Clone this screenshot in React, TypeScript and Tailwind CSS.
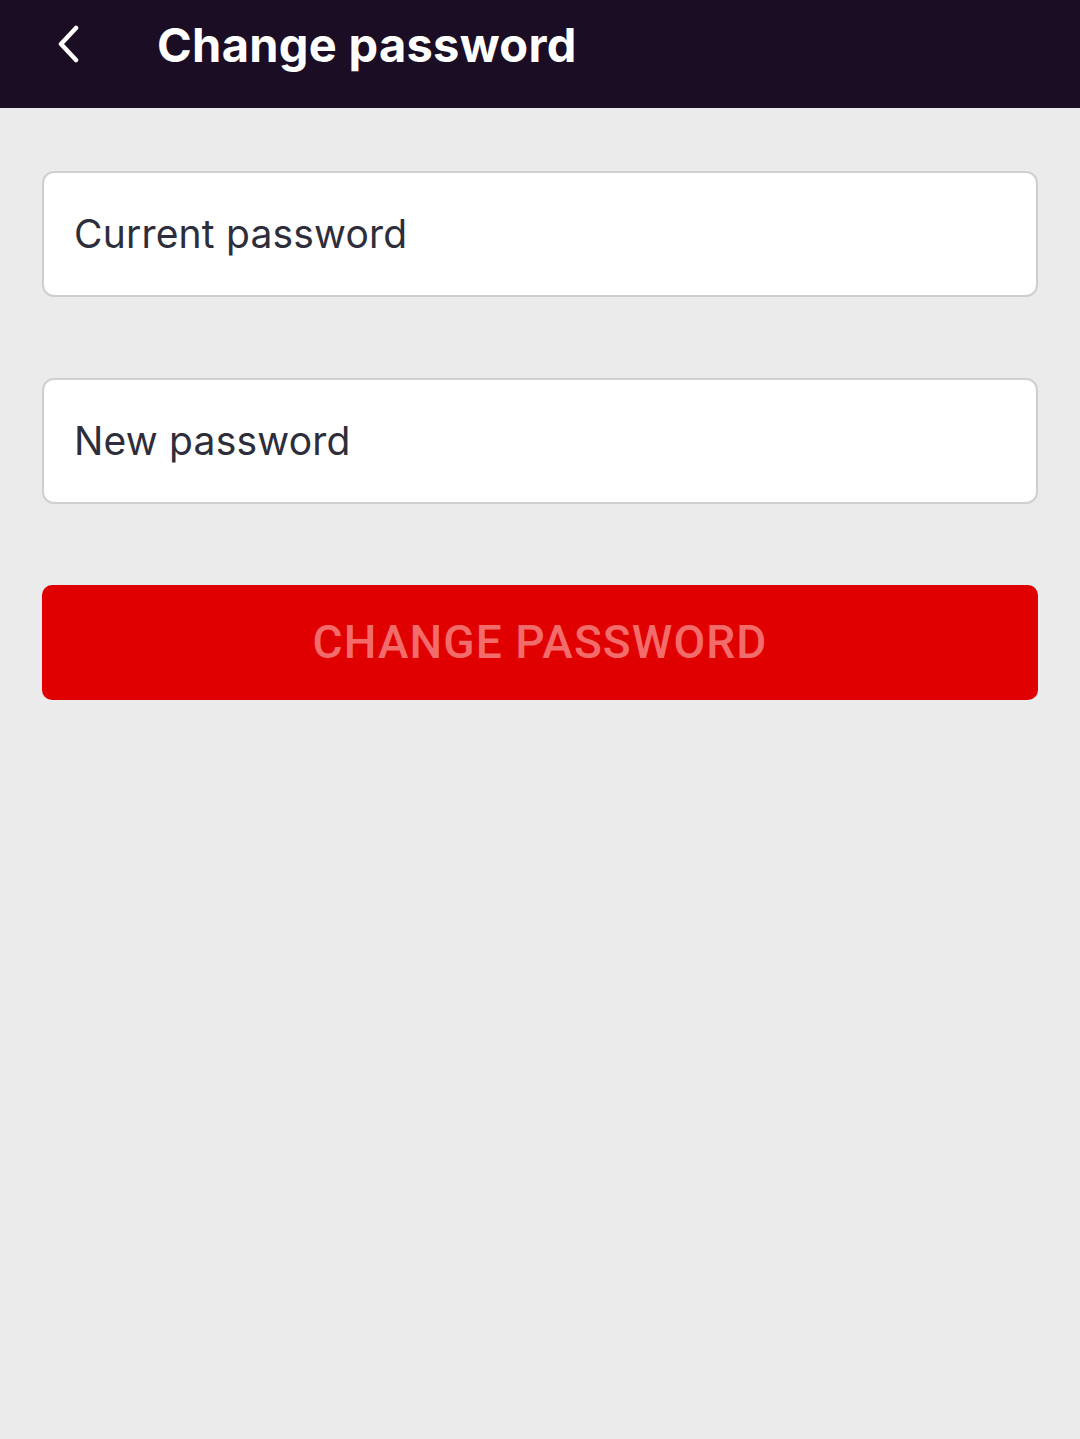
export default function App() {
  return (
    <div className="min-h-[1439px] w-full bg-[#ebebeb]" style={{ fontFamily: 'Inter, "Noto Sans", sans-serif' }}>
      <header className="flex h-[108px] items-center bg-[#1b0d24] pb-[18px]">
        <button className="ml-[47px] flex h-[40px] w-[40px] items-center justify-center text-white">
          <svg width="30" height="40" viewBox="0 0 30 40" fill="none">
            <path d="M24 3 L9 19 L24 35" stroke="currentColor" strokeWidth="4.5" strokeLinecap="round" strokeLinejoin="round" />
          </svg>
        </button>
        <h1 className="ml-[70px] text-[47px] font-bold tracking-[0.3px] text-white">Change password</h1>
      </header>

      <main className="flex flex-col px-[42px] pt-[63px]">
        <div className="flex h-[126px] items-center rounded-[12px] border-2 border-[#cfcfcf] bg-white px-[30px]">
          <span className="text-[39px] tracking-[0.2px] text-[#2e2d3b]">Current password</span>
        </div>
        <div className="mt-[81px] flex h-[126px] items-center rounded-[12px] border-2 border-[#cfcfcf] bg-white px-[30px]">
          <span className="text-[39px] tracking-[0.2px] text-[#2e2d3b]">New password</span>
        </div>
        <button
          className="mt-[81px] flex h-[115px] items-center justify-center rounded-[10px] bg-[#e10000] text-[46px] font-medium tracking-[1.1px] text-[#f36c6c]"
          style={{ fontFamily: 'Roboto, sans-serif' }}
        >
          CHANGE PASSWORD
        </button>
      </main>
    </div>
  );
}
